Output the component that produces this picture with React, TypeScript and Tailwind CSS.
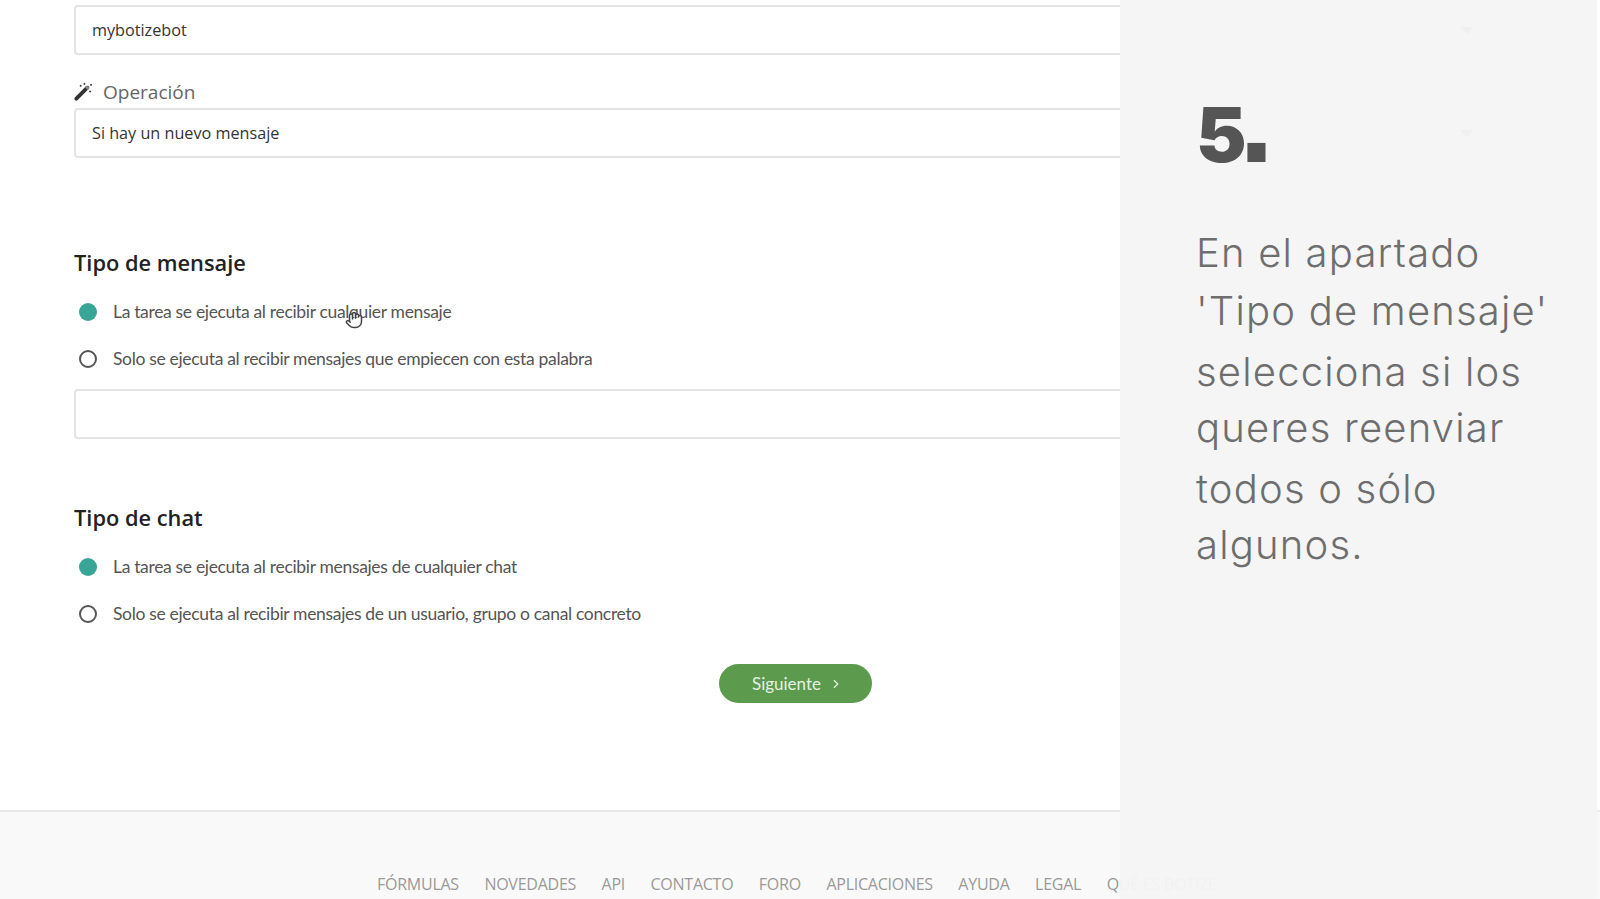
import { ChevronRight, Hand } from "lucide-react";

const footerLinks = ["FÓRMULAS", "NOVEDADES", "API", "CONTACTO", "FORO", "APLICACIONES", "AYUDA", "LEGAL", "QUÉ ES BOTIZE"];

const panelLines = [
  { text: "En el apartado", h: "h-[58px]" },
  { text: "'Tipo de mensaje'", h: "h-[61px]" },
  { text: "selecciona si los", h: "h-[56px]" },
  { text: "queres reenviar", h: "h-[61px]" },
  { text: "todos o sólo", h: "h-[56px]" },
  { text: "algunos.", h: "h-[58px]" },
];

function WandIcon() {
  return (
    <svg viewBox="0 0 20 20" className="mb-[5px] h-[19px] w-[19px] text-[#333]" fill="none" stroke="currentColor">
      <path d="M2.5 17.5 L14 6" strokeWidth="4" strokeLinecap="round" />
      <path d="M13 7 L15 5" strokeWidth="4" stroke="#888" />
      <path d="M7 3v2M6 4h2M11 1v2M10 2h2M17 9v2M16 10h2M18 2v2M17 3h2" strokeWidth="1" />
    </svg>
  );
}

function SelectBox({ value }: { value: string }) {
  return (
    <div className="relative flex h-[50px] items-center rounded border-2 border-[#e4e4e4] bg-white pl-4 text-[16.2px] font-medium text-[#333]">
      {value}
      <span className="absolute right-[40px] top-[20px] h-0 w-0 border-x-[7px] border-t-[7px] border-x-transparent border-t-[#777]" />
    </div>
  );
}

function Radio({ checked, label }: { checked?: boolean; label: string }) {
  return (
    <label className="flex h-[24px] items-center gap-[16px] pl-[5px] font-['Lato',sans-serif] text-[17.5px] tracking-[-0.33px] text-[#555]">
      {checked ? (
        <span className="h-[18px] w-[18px] rounded-full bg-[#39a597]" />
      ) : (
        <span className="h-[18px] w-[18px] rounded-full border-2 border-[#555]" />
      )}
      {label}
    </label>
  );
}

export default function App() {
  return (
    <div className="relative h-[899px] w-[1600px] overflow-hidden bg-white font-['Open_Sans',sans-serif]">
      <main className="h-[810px] pl-[74px] pr-[84px] pt-[5px]">
        <SelectBox value="mybotizebot" />
        <div className="flex h-[53px] items-end gap-[10px] pb-[2px] text-[19px] text-[#666]">
          <WandIcon />
          Operación
        </div>
        <SelectBox value="Si hay un nuevo mensaje" />

        <h2 className="mt-[88px] text-[21.8px] font-semibold leading-[34px] text-[#222]">Tipo de mensaje</h2>
        <div className="mt-[20px] flex flex-col gap-[23px]">
          <Radio checked label="La tarea se ejecuta al recibir cualquier mensaje" />
          <Radio label="Solo se ejecuta al recibir mensajes que empiecen con esta palabra" />
        </div>
        <div className="mt-[18px] h-[50px] rounded border-2 border-[#e4e4e4] bg-white" />

        <h2 className="mt-[62px] text-[21.8px] font-semibold leading-[34px] text-[#222]">Tipo de chat</h2>
        <div className="mt-[20px] flex flex-col gap-[23px]">
          <Radio checked label="La tarea se ejecuta al recibir mensajes de cualquier chat" />
          <Radio label="Solo se ejecuta al recibir mensajes de un usuario, grupo o canal concreto" />
        </div>

        <div className="mt-[38px] pl-[645px]">
          <button className="flex h-[39px] w-[153px] items-center justify-center gap-[8px] rounded-full bg-[#5c9b4d] pl-[4px] font-['Lato',sans-serif] text-[17px] text-[#e6f0e2]">
            Siguiente
            <ChevronRight className="h-[14px] w-[14px]" />
          </button>
        </div>
      </main>

      <footer className="h-[89px] border-t-2 border-[#e8e8e8] bg-[#f9f9f9] pl-[377px] pt-[60px]">
        <ul className="flex gap-[25.5px] whitespace-nowrap text-[16px] tracking-[-0.25px] text-[#9a9a9a]">
          {footerLinks.map((link) => (
            <li key={link}>{link}</li>
          ))}
        </ul>
      </footer>

      {/* cursor over the first radio label */}
      <Hand className="absolute left-[345px] top-[311px] h-[18px] w-[18px] fill-white text-[#444]" />

      {/* tutorial panel over the form */}
      <aside className="absolute bottom-0 left-[1120px] right-[3px] top-0 rounded-br-[4px] bg-[#f5f5f5]/[0.96] pl-[76px] pt-[54px] text-[#6e6e6e]">
        <div className="font-['Inter',sans-serif] text-[76px] font-black leading-[100px] text-[#555]">
          <span className="tracking-[-8px]">5</span>
          <span className="font-['Liberation_Sans',sans-serif] text-[128px] font-bold leading-none">.</span>
        </div>
        <div className="mt-[39px] whitespace-nowrap font-['Inter',sans-serif] text-[40px] font-light tracking-[1.2px]">
          {panelLines.map((line) => (
            <p key={line.text} className={line.h}>
              {line.text}
            </p>
          ))}
        </div>
      </aside>
    </div>
  );
}
